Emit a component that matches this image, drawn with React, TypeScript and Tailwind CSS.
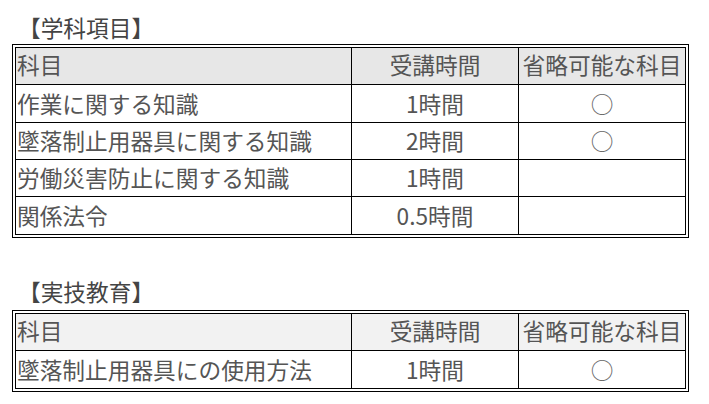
const rows1 = [
  { name: '作業に関する知識', hours: '1時間', optional: true },
  { name: '墜落制止用器具に関する知識', hours: '2時間', optional: true },
  { name: '労働災害防止に関する知識', hours: '1時間', optional: false },
  { name: '関係法令', hours: '0.5時間', optional: false },
];

const rows2 = [{ name: '墜落制止用器具にの使用方法', hours: '1時間', optional: true }];

type Row = { name: string; hours: string; optional: boolean };

function SubjectTable({ rows, headerBg, firstTall }: { rows: Row[]; headerBg: string; firstTall?: boolean }) {
  return (
    <div className="w-[677px] border border-black p-[2px]">
      <div className="border border-black">
        <div className={`flex h-[37px] border-b border-black ${headerBg}`}>
          <div className="w-[336px] border-r border-black pl-[1px] pb-[3px] flex items-center">科目</div>
          <div className="w-[167px] border-r border-black pb-[3px] flex items-center justify-center">受講時間</div>
          <div className="flex-1 pb-[3px] flex items-center justify-center">省略可能な科目</div>
        </div>
        {rows.map((r, i) => (
          <div
            key={r.name}
            className={`flex ${i === 0 && firstTall ? 'h-[38px]' : 'h-[37px]'} ${i < rows.length - 1 ? 'border-b border-black' : 'h-[36px]'}`}
          >
            <div className="w-[336px] border-r border-black pl-[1px] flex items-center">{r.name}</div>
            <div className="w-[167px] border-r border-black flex items-center justify-center">{r.hours}</div>
            <div className="flex-1 flex items-center justify-center text-[#666]">{r.optional ? '○' : ''}</div>
          </div>
        ))}
      </div>
    </div>
  );
}

export default function App() {
  return (
    <div
      className="w-[709px] h-[404px] bg-white pl-[12px] text-[22.7px] text-[#555] leading-[30px]"
      style={{ fontFamily: '"Noto Sans CJK JP", "Noto Sans", sans-serif' }}
    >
      <div className="pt-[13px] pb-[1px] pl-[6px] text-[#444]">【学科項目】</div>
      <SubjectTable rows={rows1} headerBg="bg-[#e7e7e7]" firstTall />
      <div className="pt-[39px] pb-[3px] pl-[6px] text-[#444]">【実技教育】</div>
      <SubjectTable rows={rows2} headerBg="bg-[#f2f2f2]" />
    </div>
  );
}
